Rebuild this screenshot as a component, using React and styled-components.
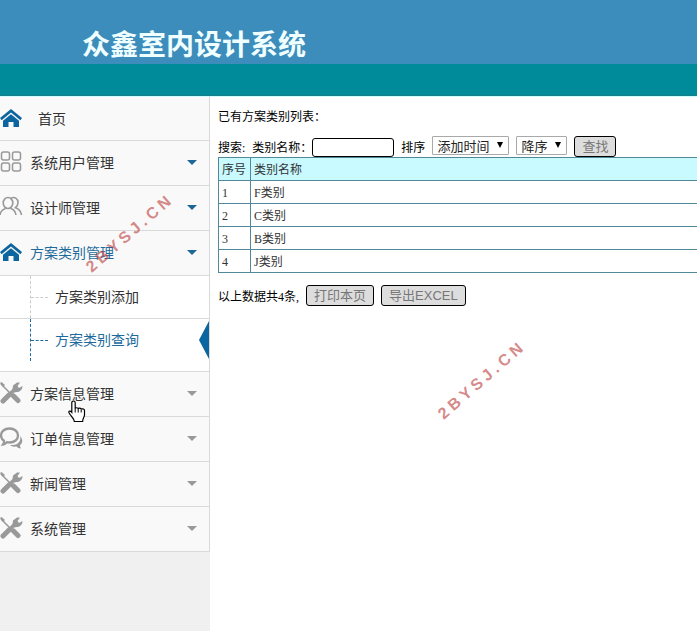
import React from 'react';
import styled, { createGlobalStyle } from 'styled-components';

const GlobalStyle = createGlobalStyle`
  * {
    box-sizing: border-box;
  }
  body {
    margin: 0;
    background: #fff;
    color: #000;
    font-family: 'Liberation Serif', 'Noto Sans CJK SC', serif;
    font-size: 12px;
    overflow-x: hidden;
  }
  button,
  input,
  select {
    font-family: 'Liberation Sans', 'Noto Sans CJK SC', sans-serif;
    font-size: 13px;
  }
`;

const Page = styled.div`
  position: relative;
  min-height: 100vh;
  display: flex;
  flex-direction: column;
`;

const Header = styled.header`
  background: #3c8dbc;
  height: 64px;
  padding: 23px 0 0 82px;
`;

const Title = styled.h1`
  margin: 0;
  color: #f0ffff;
  font-family: 'Noto Sans CJK SC', sans-serif;
  font-size: 28px;
  font-weight: 700;
  line-height: 40px;
`;

const Bar = styled.div`
  height: 32px;
  background: #008b9b;
  border-bottom: 1px solid #167f8c;
`;

const Body = styled.div`
  flex: 1;
  display: flex;
  box-shadow: inset 0 1px #c8ffff;
`;

const Sidebar = styled.nav`
  flex: 0 0 210px;
  background: #f0f0f0;
  font-family: 'Noto Sans CJK SC', sans-serif;
  font-size: 14px;
`;

const Menu = styled.ul`
  list-style: none;
  margin: 0;
  padding: 0;
  background: #f9f9f9;
  border-top: 1px solid #c8ffff;
  border-right: 1px solid #d9d9d9;
  > li:first-child > a {
    height: 44px;
  }
`;

const MenuLink = styled.a`
  display: flex;
  align-items: center;
  gap: ${({ $home }) => ($home ? '15px' : '7px')};
  height: 45px;
  padding: 0 12px 2px 0;
  border-bottom: 1px solid #d9d9d9;
  color: ${({ $active }) => ($active ? '#1d6a9c' : '#333')};
  text-decoration: none;
  svg {
    flex: none;
  }
  span {
    flex: 1;
  }
`;

const Caret = styled.i`
  border: 5px solid transparent;
  border-top-color: ${({ $open }) => ($open ? '#1c6797' : '#999')};
  border-bottom: 0;
`;

const SubMenu = styled.ul`
  list-style: none;
  margin: 0;
  padding: 0 0 10px;
  background: #fff;
  border-bottom: 1px solid #d9d9d9;
  li + li {
    border-top: 1px solid #d9d9d9;
  }
`;

const SubLink = styled.a`
  display: flex;
  align-items: center;
  height: 42px;
  margin-left: 30px;
  gap: 7px;
  border-left: 1px dashed;
  border-color: ${({ $active }) => ($active ? '#1d6a9c' : '#ccc')};
  color: ${({ $active }) => ($active ? '#1d6a9c' : '#333')};
  text-decoration: none;
  &::before {
    content: '';
    width: 17px;
    border-top: 1px dashed;
    border-color: inherit;
  }
  span {
    flex: 1;
    padding-bottom: 2px;
  }
`;

const Pointer = styled.i`
  border: solid transparent;
  border-width: 19px 10px 19px 0;
  border-right-color: #0a65a0;
`;

const Main = styled.main`
  flex: 1;
  min-width: 0;
  padding: 11px 0 0 8px;
`;

const Caption = styled.p`
  margin: 0 0 9px;
  line-height: 20px;
`;

const Tools = styled.form`
  display: flex;
  align-items: flex-start;
  gap: 7px;
  height: 21px;
  white-space: nowrap;
`;

const Label = styled.label`
  line-height: 25px;
`;

const Field = styled.div`
  display: flex;
`;

const TextBox = styled.input`
  width: 82px;
  height: 19px;
  margin-top: 2px;
  padding: 0 4px;
  border: 1px solid #000;
  border-radius: 3px;
  background: #fff;
`;

const SelectBox = styled.div`
  position: relative;
  &::after {
    content: '';
    position: absolute;
    top: 6px;
    right: 6px;
    border: 3px solid transparent;
    border-top: 6px solid #000;
    border-bottom: 0;
    pointer-events: none;
  }
`;

const Select = styled.select`
  appearance: none;
  display: block;
  height: 19px;
  padding: 1px 18px 0 4px;
  border: 1px solid #a9a9a9;
  border-radius: 1px;
  background: #fff;
  color: #222;
`;

const Button = styled.button`
  height: 21px;
  padding: 0 7px;
  border: 1px solid #000;
  border-radius: 3px;
  background: #ddd;
  color: #777;
  line-height: 19px;
`;

const Table = styled.table`
  width: 100%;
  border-collapse: collapse;
  color: #333;
  th,
  td {
    height: 23px;
    padding: 2px 3px 0;
    border: 1px solid #52899a;
    border-right: 0;
    font-weight: 400;
    line-height: 20px;
    text-align: left;
  }
  th {
    background: #c8faff;
  }
  th:first-child {
    width: 32px;
    white-space: nowrap;
  }
`;

const Footer = styled.div`
  display: flex;
  align-items: flex-start;
  gap: 7px;
  margin-top: 12px;
  line-height: 25px;
`;

const Watermark = styled.div`
  position: absolute;
  left: ${({ $left }) => $left}px;
  top: ${({ $top }) => $top}px;
  transform: translate(-50%, -50%) rotate(-41deg);
  color: rgba(190, 70, 70, 0.65);
  font-family: 'Liberation Sans', sans-serif;
  font-size: 16px;
  font-weight: 700;
  letter-spacing: 4px;
  line-height: 20px;
  pointer-events: none;
`;

const Cursor = styled.svg`
  position: absolute;
  left: 68px;
  top: 400px;
  pointer-events: none;
`;

const icons = {
  home: (
    <svg width="23" height="22" viewBox="0 0 23 22" fill="#0d65a0">
      <path d="M11 2 0 11l1.600 2.200L11 5.500l9.400 7.700L22 11z" />
      <path d="M11 7.200 3 13.700V20h5.500v-5h5v5H19v-6.300z" />
    </svg>
  ),
  grid: (
    <svg width="23" height="22" viewBox="0 0 23 22" fill="none" stroke="#999" strokeWidth="1.500">
      <rect x="1.500" y="1" width="8" height="8" rx="2" />
      <rect x="12.500" y="1" width="8" height="8" rx="2" />
      <rect x="1.500" y="12" width="8" height="8" rx="2" />
      <rect x="12.500" y="12" width="8" height="8" rx="2" />
    </svg>
  ),
  users: (
    <svg width="23" height="22" viewBox="0 0 23 22" fill="none" stroke="#999" strokeWidth="1.600">
      <ellipse cx="8" cy="7" rx="4.800" ry="5.500" />
      <path d="M0 19c.3-3.500 2.500-5.500 5.500-6.500M10.500 12.200c3 1 5 3 5.500 6.800M11 2.200c3.500-2 7 .5 7 4.300 0 2.500-1.200 4.200-2.500 5.200 3.500 1.300 5.500 3.500 6 7.300" />
    </svg>
  ),
  tools: (
    <svg width="23" height="22" viewBox="0 0 23 22">
      <path d="m1 2 11 11" stroke="#999" strokeWidth="1.600" />
      <path d="m0 1 1.500-1L5 3 3 5z" fill="#999" />
      <path d="m13.500 14 4.500 4.500" stroke="#999" strokeWidth="5" strokeLinecap="round" />
      <path d="m3 19 6-6" stroke="#999" strokeWidth="5" strokeLinecap="round" />
      <path d="m9 13 6-6" stroke="#999" strokeWidth="3.500" />
      <path d="M12.500 7.500 13 3.500 17 .5h3L17.500 4l1.500 2L22.500 4c0 3.500-2.500 6-5.500 6l-3 .5z" fill="#999" />
    </svg>
  ),
  chat: (
    <svg width="23" height="22" viewBox="0 0 23 22">
      <path d="M17 17c3-2 4-5 3-8 3 3 3 7 0 9 0 1.500.5 2.500 1 3.500-2 0-3.500-1-4.500-2-3 .5-5-.2-6.500-1.500 2.500.2 5 0 7-1z" fill="#999" />
      <path d="M9.500 1.500c5 0 8.500 3 8.500 7s-3.500 7-8.500 7c-1 0-1.500 0-2.500-.300-1 1-2.500 2.300-4 2.300.8-1 1.200-2.500 1-3.700C2.200 12.600 1 10.700 1 8.500c0-4 3.500-7 8.500-7z" fill="none" stroke="#999" strokeWidth="2.300" />
    </svg>
  ),
};

const menu = [
  { title: '首页', icon: 'home', home: true },
  { title: '系统用户管理', icon: 'grid', open: true },
  { title: '设计师管理', icon: 'users', open: true },
  {
    title: '方案类别管理',
    icon: 'home',
    open: true,
    active: true,
    children: ['方案类别添加', '方案类别查询'],
  },
  { title: '方案信息管理', icon: 'tools' },
  { title: '订单信息管理', icon: 'chat' },
  { title: '新闻管理', icon: 'tools' },
  { title: '系统管理', icon: 'tools' },
];

const rows = ['F类别', 'C类别', 'B类别', 'J类别'];

export default function App() {
  return (
    <Page>
      <GlobalStyle />
      <Header>
        <Title>众鑫室内设计系统</Title>
      </Header>
      <Bar />
      <Body>
        <Sidebar>
          <Menu>
            {menu.map((item) => (
              <li key={item.title}>
                <MenuLink href="#" $home={item.home} $active={item.active}>
                  {icons[item.icon]}
                  <span>{item.title}</span>
                  {!item.home && <Caret $open={item.open} />}
                </MenuLink>
                {item.children && (
                  <SubMenu>
                    {item.children.map((child, i) => (
                      <li key={child}>
                        <SubLink href="#" $active={i === 1}>
                          <span>{child}</span>
                          {i === 1 && <Pointer />}
                        </SubLink>
                      </li>
                    ))}
                  </SubMenu>
                )}
              </li>
            ))}
          </Menu>
        </Sidebar>
        <Main>
          <Caption>已有方案类别列表：</Caption>
          <Tools onSubmit={(e) => e.preventDefault()}>
            <Label as="span">搜索:</Label>
            <Field>
              <Label htmlFor="name">类别名称：</Label>
              <TextBox id="name" type="text" />
            </Field>
            <Label htmlFor="sort">排序</Label>
            <SelectBox>
              <Select id="sort">
                <option>添加时间</option>
              </Select>
            </SelectBox>
            <SelectBox>
              <Select aria-label="排序">
                <option>降序</option>
              </Select>
            </SelectBox>
            <Button type="submit">查找</Button>
          </Tools>
          <Table>
            <thead>
              <tr>
                <th>序号</th>
                <th>类别名称</th>
              </tr>
            </thead>
            <tbody>
              {rows.map((name, i) => (
                <tr key={name}>
                  <td>{i + 1}</td>
                  <td>{name}</td>
                </tr>
              ))}
            </tbody>
          </Table>
          <Footer>
            <span>以上数据共{rows.length}条,</span>
            <Button type="button">打印本页</Button>
            <Button type="button">导出EXCEL</Button>
          </Footer>
        </Main>
      </Body>
      <Watermark $left={130} $top={233}>2BYSJ.CN</Watermark>
      <Watermark $left={482} $top={380}>2BYSJ.CN</Watermark>
      <Cursor width="18" height="23" viewBox="0 0 18 23">
        <path
          d="M5.500 1c1 0 1.700.7 1.700 1.700v6c0-1.300 3-1.300 3 .4 0-1.400 3-1.200 3 .5 0-1.200 3.300-1 3.300.9v4.500c0 2-1.900 3.500-1.900 6.500H6.300c0-3-4-6-5.400-9-.5-1.600 1.400-2 2.900-.2V2.700C3.800 1.700 4.500 1 5.500 1z"
          fill="#fff"
          stroke="#000"
          strokeWidth="1.200"
        />
        <path d="M7.200 8.500v4M10.200 9v3.500M13.200 9.500v3" stroke="#000" />
      </Cursor>
    </Page>
  );
}
